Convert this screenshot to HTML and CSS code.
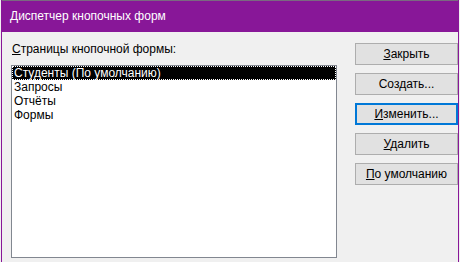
FILE: index.html
```html
<!DOCTYPE html>
<html>
<head lang="ru">
    <meta charset="UTF-8">
    <title>Диспетчер кнопочных форм</title>
    <link rel="stylesheet" href="styles.css">
</head>
<body>
<div class="window">
    <div class="titlebar">Диспетчер кнопочных форм</div>
    <div class="content">
        <div class="left">
            <div class="label"><u>С</u>траницы кнопочной формы:</div>
            <div class="listbox">
                <div class="item selected">Студенты (По умолчанию)</div>
                <div class="item">Запросы</div>
                <div class="item">Отчёты</div>
                <div class="item">Формы</div>
            </div>
        </div>
        <div class="buttons">
            <div class="btn"><u>З</u>акрыть</div>
            <div class="btn">Соз<u>д</u>ать...</div>
            <div class="btn focus"><u>И</u>зменить...</div>
            <div class="btn"><u>У</u>далить</div>
            <div class="btn"><u>П</u>о умолчанию</div>
        </div>
    </div>
</div>
</body>
</html>
```

FILE: styles.css
```css
body {
    margin: 0;
    background-color: #f0f0f0;
    font-family: "Liberation Sans", Arial, sans-serif;
    font-size: 12px;
    color: #000;
}

.window {
    margin-left: 1px;
    width: 456px;
    height: 262px;
    border-left: 1px solid #881798;
    border-right: 1px solid #881798;
    background-color: #f0f0f0;
}

.titlebar {
    height: 31px;
    border-top: 1px solid #7a6a80;
    background-color: #881798;
    color: #fff;
    line-height: 31px;
    padding-left: 8px;
}

.content {
    display: flex;
    padding-left: 9px;
}

.left {
    width: 326px;
    padding-top: 10px;
}

.label {
    height: 15px;
    line-height: 15px;
    padding-left: 1px;
    margin-bottom: 8px;
}

.listbox {
    height: 191px;
    border: 1px solid #828790;
    background-color: #fff;
}

.item {
    height: 14px;
    line-height: 14px;
    padding-left: 2px;
}

.selected {
    background-color: #000;
    color: #fff;
    outline: 1px dotted #fff;
    outline-offset: -1px;
}

.buttons {
    margin-left: 18px;
    padding-top: 11px;
    display: flex;
    flex-direction: column;
    gap: 8px;
}

.btn {
    box-sizing: border-box;
    width: 103px;
    height: 22px;
    line-height: 20px;
    border: 1px solid #adadad;
    background-color: #e1e1e1;
    text-align: center;
}

.btn.focus {
    border: 2px solid #0078d7;
    line-height: 18px;
}
```
